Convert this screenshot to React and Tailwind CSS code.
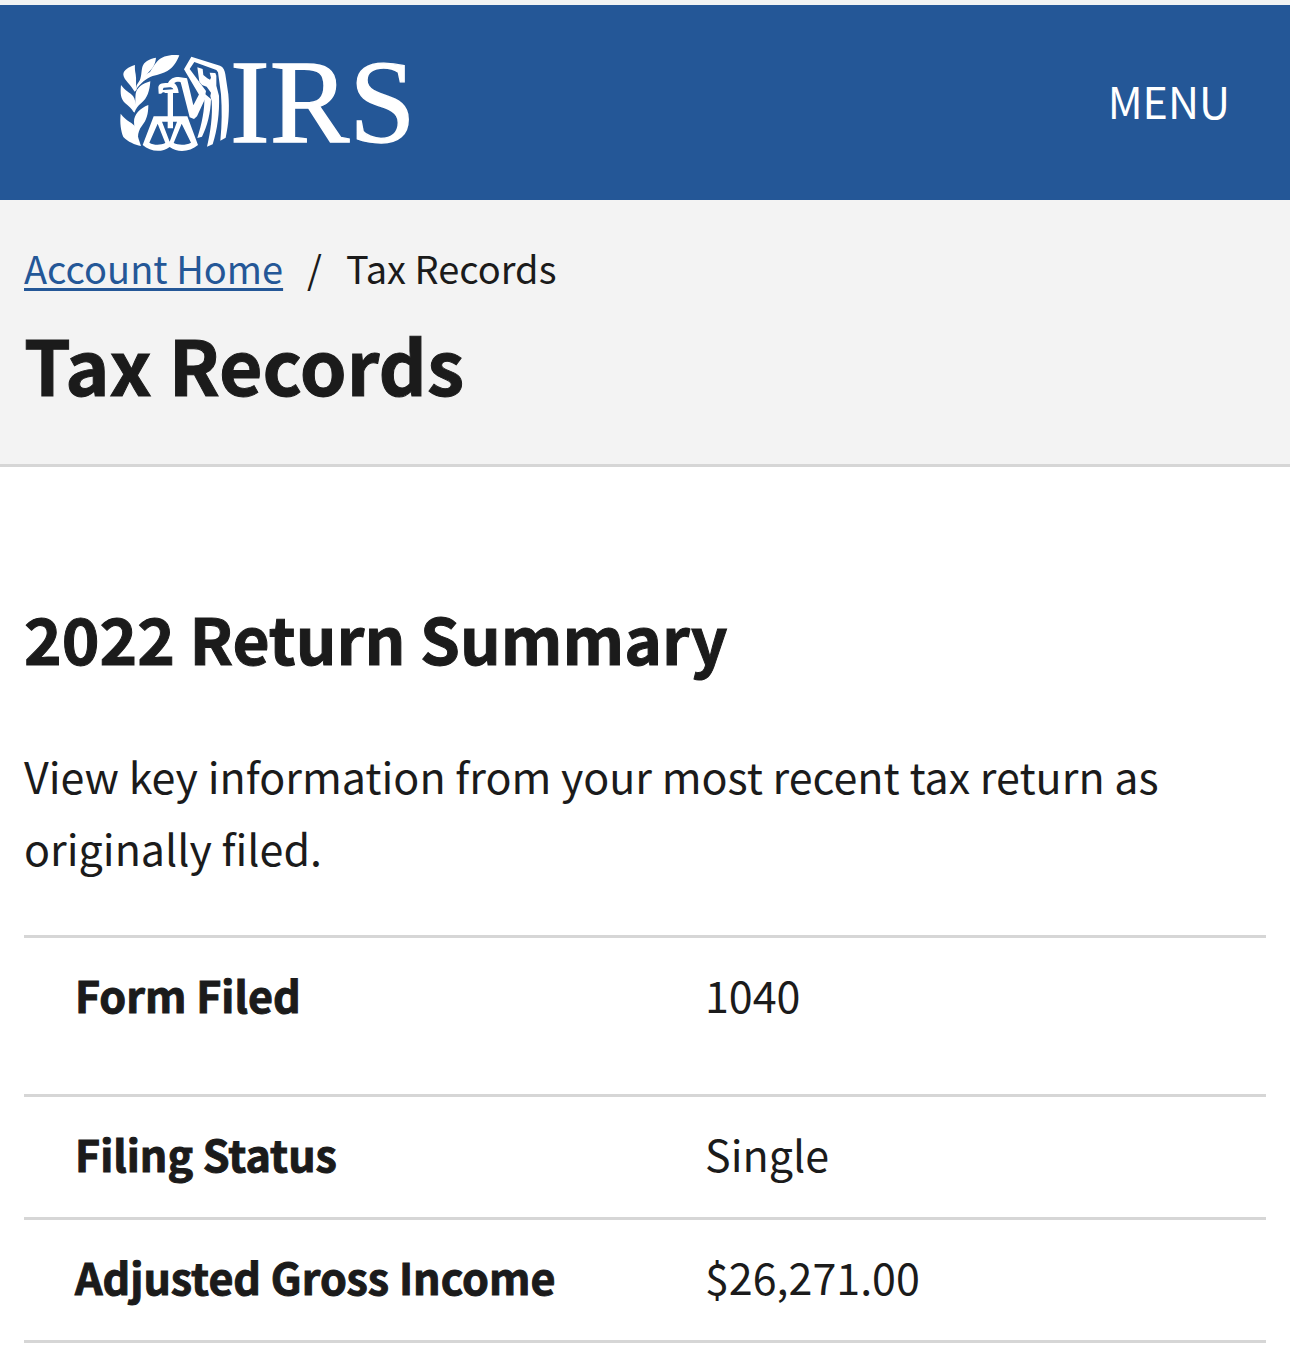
const summaryRows = [
  { label: 'Form Filed', value: '1040', tall: true },
  { label: 'Filing Status', value: 'Single' },
  { label: 'Adjusted Gross Income', value: '$26,271.00' },
]

function Logo() {
  return (
    <svg viewBox="30 0 900 372" className="h-31 w-75 overflow-visible" fill="currentColor" aria-hidden="true">
      {/* olive branch */}
      <path d="M208 43C178 40 156 46 142 61C131 73 126 84 120 93C106 100 92 111 80 133L77 147C92 126 108 113 128 105C146 101 160 97 172 90C190 80 200 63 208 43Z" />
      <path d="M138 50C116 54 102 62 97 78C93 93 96 108 84 132L92 122C100 110 108 102 117 92C130 80 136 68 138 50Z" />
      <path d="M75 72C55 78 40 88 40 101C42 117 62 130 74 152L80 146C76 130 80 115 77 100C75 90 74 80 75 72Z" />
      <path d="M33 132C30 160 33 174 45 186C56 196 66 202 71 214L77 200C77 188 76 174 69 165C60 155 44 148 33 132Z" />
      <path d="M121 121C97 128 80 140 77 158C75 175 78 190 71 206L73 216C78 202 84 194 94 186C112 172 119 150 121 121Z" />
      <path d="M32 218C29 246 33 270 40 288C54 302 74 312 93 315C88 300 83 288 82 274C79 256 70 250 59 243C48 236 40 228 32 218Z" />
      <path d="M115 192C90 202 72 220 72 242C72 258 76 270 80 284L84 288C84 276 88 264 96 254C110 238 115 218 115 192Z" />
      {/* scales */}
      <path
        fillRule="evenodd"
        d="M131 226H232L264 312C240 332 205 337 179 318C153 337 120 331 98 312ZM143 248L118 305C131 313 152 313 166 306ZM215 248L191 306C205 313 228 313 243 305ZM156 242L179 302L201 242H189V262H173V242Z"
      />
      <path d="M173 148H189V232H173Z" />
      {/* eagle head and neck */}
      <path
        fillRule="evenodd"
        d="M145 141C145 130 152 126 174 126C180 113 192 108 206 108L231 112L250 193L268 158L286 172L261 226L252 234L239 229L212 124C204 121 196 123 193 127C200 132 205 142 206 156H166C162 152 157 153 154 158L146 158ZM161 140C158 144 158 147 160 147L190 145C187 137 178 138 161 140Z"
      />
      {/* wing */}
      <path d="M244 47L330 74C340 78 344 88 346 100L355 160C359 205 356 250 347 290L331 299C336 250 336 205 333 160L324 94L319 87L253 63L239 84L288 150L283 178L268 163L222 85Z" />
      <path d="M262 79L278 84L280 102L292 112L300 116L303 110L299 95L316 96L319 104V134L327 164C329 215 322 265 308 310L291 317C302 270 308 225 305 180L301 165L303 155L290 137L276 132L268 122Z" />
      <path d="M284 158L303 174C302 215 292 255 276 287L262 291C276 248 284 205 283 172Z" />
      <text
        x="360"
        y="304"
        fontSize="358"
        fontFamily="'Liberation Serif', serif"
        stroke="currentColor"
        strokeWidth="4"
      >
        IRS
      </text>
    </svg>
  )
}

function Header() {
  return (
    <header className="flex h-50 items-center justify-between border-t-5 border-[#f1f3f3] bg-[#245797] pr-15 pl-30">
      <a href="#" aria-label="IRS home" className="text-white">
        <Logo />
      </a>
      <button className="pb-1 text-[43px] text-white">MENU</button>
    </header>
  )
}

function PageTitle() {
  return (
    <section className="border-b-3 border-[#d6d6d6] bg-[#f3f3f3] px-6 pt-9 pb-13">
      <nav className="flex gap-6 text-[38px] leading-16">
        <a
          href="#"
          className="text-[#245797] underline decoration-3 underline-offset-4 [text-decoration-skip-ink:none]"
        >
          Account Home
        </a>
        <span>/</span>
        <span>Tax Records</span>
      </nav>
      <h1 className="mt-4 text-[75px] leading-24 font-bold [-webkit-text-stroke:1px]">Tax Records</h1>
    </section>
  )
}

export default function App() {
  return (
    <div className="min-h-screen bg-white font-['Noto_Sans_CJK_SC',sans-serif] text-[#1b1b1b]">
      <Header />
      <PageTitle />
      <main className="px-6 pt-32">
        <h2 className="text-[64px] leading-[84px] font-bold [-webkit-text-stroke:1px]">2022 Return Summary</h2>
        <p className="mt-15 text-[43px] leading-18">
          View key information from your most recent tax return as originally filed.
        </p>
        <table className="mt-13 w-full table-fixed text-[43px] leading-18">
          <tbody>
            {summaryRows.map((row) => (
              <tr key={row.label} className="border-y-3 border-[#d6d6d6]">
                <th
                  scope="row"
                  className={`w-1/2 pt-5 pl-[51px] text-left font-bold [-webkit-text-stroke:1px] ${row.tall ? 'pb-16' : 'pb-7'}`}
                >
                  {row.label}
                </th>
                <td className="pt-5 pb-7 pl-15 align-top">{row.value}</td>
              </tr>
            ))}
          </tbody>
        </table>
      </main>
    </div>
  )
}
